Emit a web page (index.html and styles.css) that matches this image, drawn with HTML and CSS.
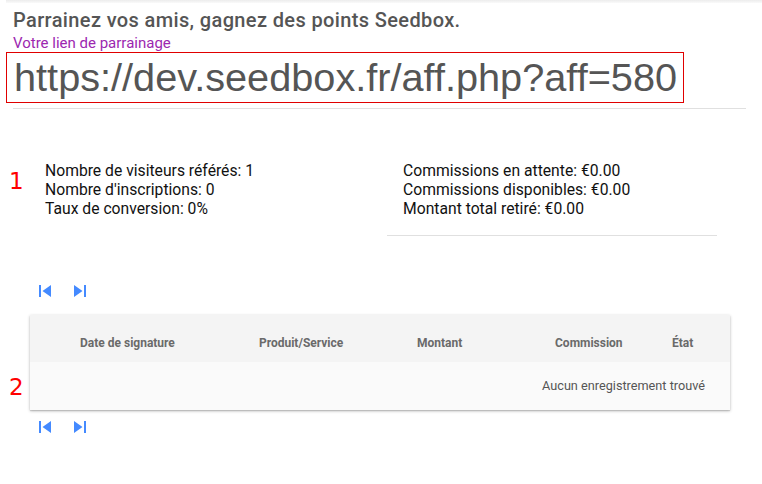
FILE: index.html
```html
<!DOCTYPE html>
<html lang="fr">
<head>
<meta charset="utf-8">
<title>Parrainage</title>
<link rel="stylesheet" href="styles.css">
</head>
<body>
<div class="topbar"></div>
<main class="page">
  <h1 class="title">Parrainez vos amis, gagnez des points Seedbox.</h1>
  <div class="link-label">Votre lien de parrainage</div>
  <div class="link-box">https://dev.seedbox.fr/aff.php?aff=580</div>
  <hr class="sep">

  <section class="stats">
    <span class="marker marker-1">1</span>
    <div class="stat-col">
      <div>Nombre de visiteurs référés: 1</div>
      <div>Nombre d'inscriptions: 0</div>
      <div>Taux de conversion: 0%</div>
    </div>
    <div class="stat-col stat-col-right">
      <div>Commissions en attente: €0.00</div>
      <div>Commissions disponibles: €0.00</div>
      <div>Montant total retiré: €0.00</div>
    </div>
  </section>

  <section class="table-area">
    <div class="pager pager-top">
      <button class="pg-btn" aria-label="Première page"><svg viewBox="0 0 24 24" width="24" height="24"><path d="M6 6h2v12H6zm3.5 6l8.5 6V6z"/></svg></button>
      <button class="pg-btn" aria-label="Dernière page"><svg viewBox="0 0 24 24" width="24" height="24"><path d="M6 18l8.5-6L6 6v12zM16 6v12h2V6h-2z"/></svg></button>
    </div>
    <div class="table-row-wrap">
      <span class="marker marker-2">2</span>
      <div class="card">
        <div class="thead">
          <div class="th">Date de signature</div>
          <div class="th">Produit/Service</div>
          <div class="th">Montant</div>
          <div class="th">Commission</div>
          <div class="th">État</div>
        </div>
        <div class="empty">Aucun enregistrement trouvé</div>
      </div>
    </div>
    <div class="pager pager-bottom">
      <button class="pg-btn" aria-label="Première page"><svg viewBox="0 0 24 24" width="24" height="24"><path d="M6 6h2v12H6zm3.5 6l8.5 6V6z"/></svg></button>
      <button class="pg-btn" aria-label="Dernière page"><svg viewBox="0 0 24 24" width="24" height="24"><path d="M6 18l8.5-6L6 6v12zM16 6v12h2V6h-2z"/></svg></button>
    </div>
  </section>
</main>
</body>
</html>
```
FILE: styles.css
```css
* { box-sizing: border-box; }
html, body { margin: 0; padding: 0; background: #fff; }
body {
  font-family: Roboto, "Noto Sans", sans-serif;
  color: #111;
  width: 762px;
  height: 484px;
  overflow: hidden;
}
.topbar {
  height: 3px;
  margin-left: 6px;
  background: linear-gradient(#ececec, #fafafa);
}
.page {
  padding: 0 0 0 6px;
}
.title {
  margin: 5px 0 0 7px;
  font-size: 20px;
  font-weight: 500;
  color: #555;
  letter-spacing: 0.37px;
  line-height: 25px;
}
.link-label {
  margin: 2px 0 0 7px;
  font-size: 15px;
  line-height: 17px;
  color: #9c27b0;
}
.link-box {
  width: 678px;
  height: 51px;
  border: 1px solid #e00000;
  font-family: "Liberation Sans", Arial, sans-serif;
  font-size: 39.7px;
  line-height: 48px;
  color: #555;
  padding-left: 7px;
  white-space: nowrap;
}
.sep {
  margin: 5px 0 0 7px;
  width: 733px;
  border: 0;
  border-top: 1px solid #e0e0e0;
}
.stats {
  position: relative;
  display: grid;
  grid-template-columns: 358px 330px;
  margin-top: 52px;
  padding-left: 23px;
}
.marker {
  position: absolute;
  font-family: "DejaVu Sans", sans-serif;
  font-size: 23px;
  line-height: 24px;
  color: #f00;
}
.marker-1 { left: 3px; top: 8px; }
.stat-col {
  padding-left: 16px;
  font-size: 15.7px;
  line-height: 19px;
  color: #111;
}
.stat-col-right {
  padding-bottom: 17px;
  border-bottom: 1px solid #e0e0e0;
}
.table-area { margin-top: 43px; }
.pager {
  display: flex;
  padding-left: 22px;
}
.pg-btn {
  width: 35px;
  height: 24px;
  padding: 0 0 0 5px;
  border: 0;
  background: none;
  display: flex;
  align-items: center;
}
.pg-btn svg { fill: #448aff; display: block; }
.table-row-wrap {
  position: relative;
  margin-top: 12px;
}
.marker-2 { left: 3px; top: 60px; }
.card {
  margin-left: 24px;
  width: 700px;
  background: #fafafa;
  box-shadow: 0 1px 3px rgba(0,0,0,0.25), 0 1px 1px rgba(0,0,0,0.12);
}
.thead {
  display: grid;
  grid-template-columns: 229px 158px 138px 117px 58px;
  height: 47px;
  padding-top: 8px;
  align-items: center;
  background: #f4f4f4;
}
.th {
  font-size: 12px;
  font-weight: 700;
  color: #6a6a6a;
  white-space: nowrap;
}
.th:first-child { padding-left: 50px; }
.empty {
  height: 48px;
  line-height: 48px;
  text-align: right;
  padding-right: 25px;
  font-size: 12.7px;
  color: #555;
}
.pager-bottom { margin-top: 5px; }
```
